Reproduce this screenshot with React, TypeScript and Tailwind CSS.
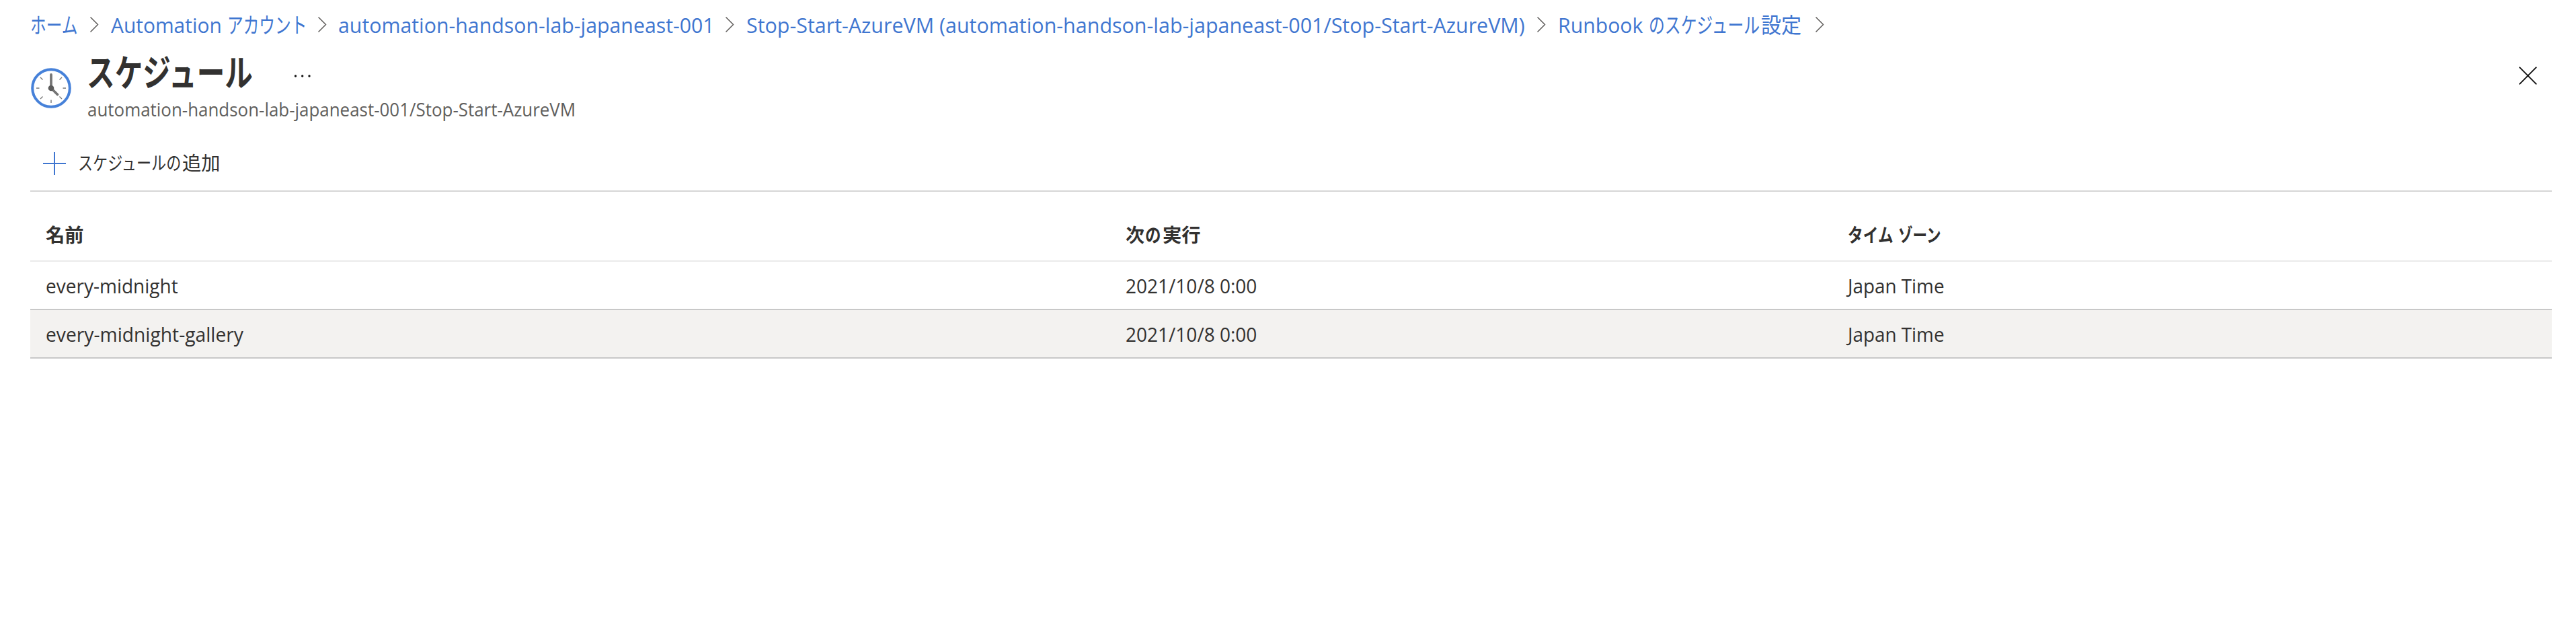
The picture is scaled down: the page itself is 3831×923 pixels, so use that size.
import type { ReactNode } from "react";

// A run of text condensed horizontally inside a box of fixed width.
function Run({ box = "", scale, children }: { box?: string; scale: string; children: ReactNode }) {
  return (
    <span className={`block shrink-0 whitespace-nowrap ${box}`}>
      <span className={`inline-block origin-left ${scale}`}>{children}</span>
    </span>
  );
}

function Chevron({ box }: { box: string }) {
  return (
    <span className={`flex h-10 shrink-0 items-center ${box}`}>
      <svg width="14" height="26" viewBox="0 0 14 26" fill="none" stroke="#605e5c" strokeWidth="1.5">
        <path d="M.5 1.500 11.500 12.500.5 23.500" />
      </svg>
    </span>
  );
}

function Clock() {
  return (
    <svg width="60" height="60" viewBox="0 0 60 60" fill="none">
      <circle cx="30" cy="30" r="27.8" stroke="#4681d9" strokeWidth="4" fill="#fff" />
      <path
        d="M8 30h4.500M47.500 30H52M30 47.500V52M14 14l3.500 3.500M46 14l-3.500 3.500M14 46l3.500-3.500M46 46l-3.500-3.500"
        stroke="#767676"
        strokeWidth="1.400"
      />
      <path d="M30 10v20l9.500 9.500" stroke="#767676" strokeWidth="3.800" strokeLinecap="round" />
      <circle cx="30" cy="30" r="4.300" fill="#5c5c5c" />
    </svg>
  );
}

const rows = [
  { name: "every-midnight", scale: "scale-x-[.966]", next: "2021/10/8 0:00", zone: "Japan Time", look: "bg-white" },
  { name: "every-midnight-gallery", scale: "scale-x-[.973]", next: "2021/10/8 0:00", zone: "Japan Time", look: "bg-[#f3f2f0]" },
];

export default function App() {
  return (
    <main className="h-[923px] w-full overflow-hidden bg-white pt-[17px] pr-9 pl-[45px] font-['Open_Sans','Noto_Sans_CJK_JP',sans-serif] text-[#323130]">
      <nav className="flex h-10 text-[31px] leading-10 text-[#3f76d0]">
        <Run box="w-[89px] text-[32px]" scale="scale-x-[.74]">ホーム</Run>
        <Chevron box="w-[31px]" />
        <Run box="w-[173px]" scale="scale-x-[.965]">Automation</Run>
        <Run box="w-[135px] text-[32px]" scale="scale-x-[.74]">アカウント</Run>
        <Chevron box="w-[30px]" />
        <Run box="w-[576px]" scale="scale-x-[.977]">automation-handson-lab-japaneast-001</Run>
        <Chevron box="w-[31px]" />
        <Run box="w-[1176px]" scale="scale-x-[.982]">
          Stop-Start-AzureVM (automation-handson-lab-japaneast-001/Stop-Start-AzureVM)
        </Run>
        <Chevron box="w-[31px]" />
        <Run box="w-[135px]" scale="scale-x-[.974]">Runbook</Run>
        <Run box="w-[167px] text-[32px]" scale="scale-x-[.745]">のスケジュール</Run>
        <Run box="w-[81px] text-[32px]" scale="scale-x-[.94]">設定</Run>
        <Chevron box="w-[14px]" />
      </nav>

      <header className="flex h-[165px] items-start pr-[22px]">
        <div className="mt-[44px] ml-[1px] w-[83px] shrink-0">
          <Clock />
        </div>
        <div className="grow pt-5">
          <div className="flex items-center">
            <h1 className="text-[55px] leading-[60px] font-bold">
              <Run box="w-[308px]" scale="scale-x-[.757]">スケジュール</Run>
            </h1>
            <svg className="mt-3" width="25" height="4" viewBox="0 0 25 4" fill="#111">
              <circle cx="2.500" cy="2" r="1.700" />
              <circle cx="12.700" cy="2" r="1.700" />
              <circle cx="23" cy="2" r="1.700" />
            </svg>
          </div>
          <p className="mt-2 pl-px text-[27px] leading-9 text-[#605e5c]">
            <Run scale="scale-x-[.96]">automation-handson-lab-japaneast-001/Stop-Start-AzureVM</Run>
          </p>
        </div>
        <svg className="mt-[42px]" width="27" height="27" viewBox="0 0 27 27" stroke="#111" strokeWidth="1.900">
          <path d="M.7.700 26.300 26.300M26.300.700.700 26.300" />
        </svg>
      </header>

      <div className="flex h-[63px] border-b-2 border-[#d6d6d6] pl-[19px] text-[28px] leading-10">
        <svg className="mt-1 mr-[18px]" width="34" height="34" viewBox="0 0 34 34" stroke="#3f76d0" strokeWidth="2">
          <path d="M17 0v34M0 17h34" />
        </svg>
        <Run box="w-[155px]" scale="scale-x-[.79]">スケジュールの</Run>
        <Run scale="scale-x-[1.01]">追加</Run>
      </div>

      <section>
        <div className="grid h-[104px] grid-cols-[1606px_1074px_1fr] border-b-2 border-[#ebebeb] pt-[44px] pl-[23px] text-[28px] leading-10 font-bold">
          <Run scale="scale-x-[1.01]">名前</Run>
          <div className="flex">
            <Run box="w-[29px]" scale="scale-x-100">次</Run>
            <Run box="w-[26px]" scale="scale-x-[.84]">の</Run>
            <Run scale="scale-x-[1.01]">実行</Run>
          </div>
          <div className="flex">
            <Run box="w-[75px]" scale="scale-x-[.81]">タイム</Run>
            <Run scale="scale-x-[.77]">ゾーン</Run>
          </div>
        </div>
        {rows.map((row) => (
          <div
            key={row.name}
            className={`grid h-[72px] grid-cols-[1606px_1074px_1fr] border-b-2 border-[#c8c8c8] pt-4 pl-[23px] text-[29px] leading-10 ${row.look}`}
          >
            <Run scale={row.scale}>{row.name}</Run>
            <Run scale="scale-x-[.966]">{row.next}</Run>
            <Run scale="scale-x-[.96]">{row.zone}</Run>
          </div>
        ))}
      </section>
    </main>
  );
}
